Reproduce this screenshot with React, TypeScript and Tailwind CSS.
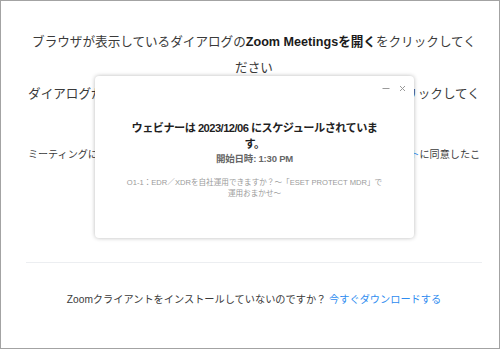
import { useState } from 'react';

const jp = { fontFamily: '"Liberation Sans", "Noto Sans CJK JP", sans-serif' };

function ScheduleModal() {
  return (
    <div className="absolute left-[94px] top-[75px] w-[319px] h-[162px] bg-white rounded-[4px] shadow-[0_0_4px_rgba(0,0,0,0.28)] text-center">
      {/* window controls */}
      <div className="absolute top-[8px] right-[8px] flex items-center gap-[9px]">
        <svg width="8" height="8" viewBox="0 0 8 8">
          <line x1="0.5" y1="4.5" x2="7.5" y2="4.5" stroke="#9a9a9a" strokeWidth="1" />
        </svg>
        <svg width="7" height="7" viewBox="0 0 7 7">
          <path d="M1 1 L6 6 M6 1 L1 6" stroke="#9a9a9a" strokeWidth="1" />
        </svg>
      </div>

      <div className="pt-[44px]">
        <p className="text-[11.2px] leading-[16px] font-bold text-[#1f1f1f] tracking-[-0.55px]">
          ウェビナーは 2023/12/06 にスケジュールされていま
          <br />
          す。
        </p>
        <p className="text-[9.5px] leading-[14px] font-bold text-[#666666] tracking-[-0.2px]">
          開始日時: 1:30 PM
        </p>
        <p className="mt-[11px] text-[7.6px] leading-[11px] text-[#9a9a9a]">
          O1-1：EDR／XDRを自社運用できますか？～「ESET PROTECT MDR」で
          <br />
          運用おまかせ～
        </p>
      </div>
    </div>
  );
}

export default function App() {
  const [open] = useState(true);

  return (
    <div
      className="relative w-[500px] h-[349px] overflow-hidden bg-white border border-[#a3a3a3]"
      style={jp}
    >
      <div className="ml-[25px] w-[456px] pt-[28px] text-center text-[#3a3a3a]">
        <p className="text-[12.6px] leading-[26px]">
          ブラウザが表示しているダイアログの<b className="text-[#1a1a1a]">Zoom Meetingsを開く</b>をクリックしてください
        </p>
        <p className="text-[12.6px] leading-[26px]">
          ダイアログが表示されない場合は、以下のミーティングを起動をクリックしてください
        </p>
        <p className="mt-[12px] text-[10.1px] leading-[20px]">
          ミーティングに参加することで、<span className="text-[#2e8cf0]">サービス利用規約</span>および
          <span className="text-[#2e8cf0]">プライバシーステートメント</span>に同意したことになります。
        </p>

        <div className="mt-[77px] h-px bg-[#eceef1]" />

        <p className="mt-[27px] text-[10.2px] leading-[20px]">
          Zoomクライアントをインストールしていないのですか？ <span className="text-[#2e8cf0]">今すぐダウンロードする</span>
        </p>
      </div>

      {open && <ScheduleModal />}
    </div>
  );
}
